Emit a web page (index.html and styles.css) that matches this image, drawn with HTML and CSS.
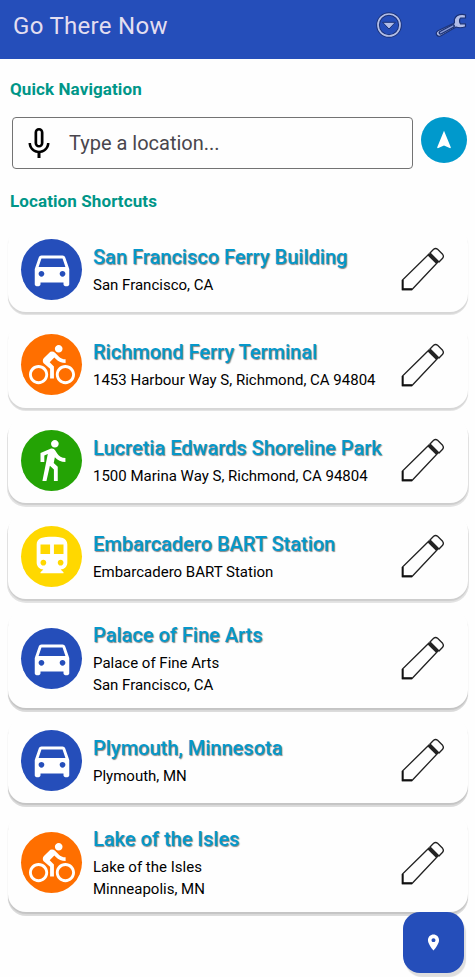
FILE: index.html
```html
<!DOCTYPE html>
<html lang="en">
<head>
<meta charset="utf-8">
<title>Go There Now</title>
<link rel="stylesheet" href="styles.css">
</head>
<body>
<svg class="defs" width="0" height="0" aria-hidden="true">
  <symbol id="car" viewBox="0 0 24 24"><path d="M18.92 6.01C18.72 5.42 18.16 5 17.5 5h-11c-.66 0-1.21.42-1.42 1.01L3 12v8c0 .55.45 1 1 1h1c.55 0 1-.45 1-1v-1h12v1c0 .55.45 1 1 1h1c.55 0 1-.45 1-1v-8l-2.080-5.990zM6.500 16c-.83 0-1.500-.67-1.500-1.500S5.670 13 6.500 13s1.500.67 1.500 1.500S7.330 16 6.500 16zm11 0c-.83 0-1.500-.67-1.500-1.500s.67-1.500 1.500-1.500 1.500.67 1.500 1.500-.67 1.500-1.500 1.500zM5 11l1.500-4.500h11L19 11H5z"/></symbol>
  <symbol id="bike" viewBox="0 0 24 24"><path d="M15.500 5.500c1.100 0 2-.9 2-2s-.9-2-2-2-2 .9-2 2 .9 2 2 2zM5 12c-2.800 0-5 2.200-5 5s2.200 5 5 5 5-2.200 5-5-2.200-5-5-5zm0 8.500c-1.900 0-3.500-1.600-3.500-3.500s1.600-3.500 3.500-3.500 3.500 1.600 3.500 3.500-1.600 3.500-3.500 3.500zm5.800-10l2.400-2.400.8.800c1.300 1.300 3 2.100 5.100 2.100V9c-1.500 0-2.700-.6-3.600-1.500l-1.900-1.900c-.5-.4-1-.6-1.600-.6s-1.100.2-1.400.6L7.800 8.400c-.4.400-.6.900-.6 1.400 0 .6.2 1.100.6 1.400L11 14v5h2v-6.200l-2.200-2.300zM19 12c-2.800 0-5 2.200-5 5s2.200 5 5 5 5-2.200 5-5-2.200-5-5-5zm0 8.500c-1.900 0-3.500-1.600-3.500-3.500s1.600-3.500 3.500-3.500 3.500 1.600 3.500 3.500-1.600 3.500-3.500 3.500z"/></symbol>
  <symbol id="walk" viewBox="0 0 24 24"><path d="M13.500 5.500c1.100 0 2-.9 2-2s-.9-2-2-2-2 .9-2 2 .9 2 2 2zM9.800 8.900L7 23h2.100l1.800-8 2.100 2v6h2v-7.500l-2.100-2 .6-3C14.800 12 16.800 13 19 13v-2c-1.900 0-3.500-1-4.300-2.400l-1-1.600c-.4-.6-1-1-1.700-1-.3 0-.5.1-.8.1L6 8.300V13h2V9.600l1.800-.7"/></symbol>
  <symbol id="train" viewBox="0 0 24 24"><path d="M12 2c-4.420 0-8 .5-8 4v9.500C4 17.430 5.570 19 7.500 19L6 20.500v.5h12v-.5L16.500 19c1.930 0 3.500-1.570 3.500-3.500V6c0-3.500-3.580-4-8-4zM7.500 17c-.83 0-1.500-.67-1.500-1.500S6.670 14 7.500 14s1.500.67 1.500 1.500S8.330 17 7.500 17zM11 11H6V6h5v5zm5.500 6c-.83 0-1.500-.67-1.500-1.500s.67-1.500 1.500-1.500 1.500.67 1.500 1.500-.67 1.500-1.500 1.500zM18 11h-5V6h5v5z"/></symbol>
  <symbol id="pencil" viewBox="0 0 46 46">
    <path d="M2.500 43.500V34L29 8l8.500 8.500L12 43.500z" fill="none" stroke="#222" stroke-width="1.300"/>
    <path d="M2.700 34v9.300H12" fill="none" stroke="#111" stroke-width="1.900"/>
    <path d="M28.800 8.300l8.600 8.500" stroke="#222" stroke-width="3.200"/>
    <path d="M30 7l3.600-3.700q2-1.600 4 0l5 5q1.600 2 0 4L39 16z" fill="#fefefe" stroke="#222" stroke-width="1.300"/>
  </symbol>
</svg>

<header class="bar">
  <h1 class="bar-title">Go There Now</h1>
  <svg class="bar-sort" viewBox="0 0 26 26">
    <circle cx="13" cy="13" r="11" fill="none" stroke="#1b3277" stroke-width="3.600"/>
    <circle cx="13" cy="13" r="11" fill="none" stroke="#b2bee8" stroke-width="1.700"/>
    <path d="M6.600 10.300h12.800L13 17z" fill="#b2bee8" stroke="#1b3277" stroke-width="1"/>
  </svg>
  <svg class="bar-tool" viewBox="0 0 32 24">
    <path d="M30.500 1.800Q22 .2 19.400 6.200V10L3 17.800Q.3 19.500 1.800 22 3.600 24.200 6 22.700L21 14q4 1.600 9.500-.2v-3h-5q-2-2.900 0-5.800h5z" fill="#b2bee8" stroke="#1b3277" stroke-width="1.200" stroke-linejoin="round"/>
    <path d="M5.500 19.700L18 13" stroke="#1b3277" stroke-width="4" stroke-linecap="round"/>
    <path d="M5.700 19.600L17.800 13.100" stroke="#8799d5" stroke-width="1.500" stroke-linecap="round"/>
  </svg>
</header>

<main class="page">
  <h2 class="section">Quick Navigation</h2>
  <div class="search">
    <div class="field">
      <svg class="mic" viewBox="0 0 24 24"><path d="M12 15c1.660 0 2.990-1.340 2.990-3L15 5c0-1.660-1.340-3-3-3S9 3.340 9 5v7c0 1.660 1.340 3 3 3zm-1.200-10.100c0-.66.54-1.200 1.200-1.200s1.200.54 1.200 1.200l-.01 7.200c0 .66-.53 1.200-1.190 1.200s-1.200-.54-1.200-1.200V4.900zm6.500 7.100c0 3-2.540 5.100-5.300 5.100S6.700 15 6.700 12H5c0 3.410 2.720 6.230 6 6.720V22h2v-3.280c3.280-.48 6-3.300 6-6.720h-1.700z"/></svg>
      <span class="placeholder">Type a location...</span>
    </div>
    <div class="go"><svg viewBox="0 0 24 24"><path d="M12 2L4.500 20.290l.71.710L12 18l6.790 3 .71-.71z"/></svg></div>
  </div>
  <h2 class="section">Location Shortcuts</h2>

  <div class="list">
    <article class="card s1">
      <div class="mode drive"><svg><use href="#car"/></svg></div>
      <div class="text"><h3>San Francisco Ferry Building</h3><p>San Francisco, CA</p></div>
      <svg class="edit"><use href="#pencil"/></svg>
    </article>
    <article class="card s1">
      <div class="mode cycle"><svg><use href="#bike"/></svg></div>
      <div class="text"><h3>Richmond Ferry Terminal</h3><p>1453 Harbour Way S, Richmond, CA 94804</p></div>
      <svg class="edit"><use href="#pencil"/></svg>
    </article>
    <article class="card s2">
      <div class="mode foot"><svg><use href="#walk"/></svg></div>
      <div class="text"><h3>Lucretia Edwards Shoreline Park</h3><p>1500 Marina Way S, Richmond, CA 94804</p></div>
      <svg class="edit"><use href="#pencil"/></svg>
    </article>
    <article class="card s2">
      <div class="mode transit"><svg><use href="#train"/></svg></div>
      <div class="text"><h3>Embarcadero BART Station</h3><p>Embarcadero BART Station</p></div>
      <svg class="edit"><use href="#pencil"/></svg>
    </article>
    <article class="card tall s3">
      <div class="mode drive"><svg><use href="#car"/></svg></div>
      <div class="text"><h3>Palace of Fine Arts</h3><p>Palace of Fine Arts<br>San Francisco, CA</p></div>
      <svg class="edit"><use href="#pencil"/></svg>
    </article>
    <article class="card s3">
      <div class="mode drive"><svg><use href="#car"/></svg></div>
      <div class="text"><h3>Plymouth, Minnesota</h3><p>Plymouth, MN</p></div>
      <svg class="edit"><use href="#pencil"/></svg>
    </article>
    <article class="card tall s3">
      <div class="mode cycle"><svg><use href="#bike"/></svg></div>
      <div class="text"><h3>Lake of the Isles</h3><p>Lake of the Isles<br>Minneapolis, MN</p></div>
      <svg class="edit"><use href="#pencil"/></svg>
    </article>
  </div>
</main>

<div class="fab"><svg viewBox="0 0 24 24"><path d="M12 2C8.130 2 5 5.130 5 9c0 5.250 7 13 7 13s7-7.750 7-13c0-3.870-3.130-7-7-7zm0 9.500c-1.380 0-2.500-1.120-2.500-2.500s1.120-2.500 2.500-2.500 2.500 1.120 2.500 2.500-1.120 2.500-2.500 2.500z"/></svg></div>
</body>
</html>
```
FILE: styles.css
```css
* { box-sizing: border-box; margin: 0; padding: 0; }
body {
  width: 475px;
  height: 977px;
  overflow: hidden;
  background: #fefefe;
  font-family: Roboto, sans-serif;
  position: relative;
}
svg { display: block; flex: none; }
.defs { position: absolute; }

.bar {
  height: 59px;
  background: #254eba;
  display: flex;
  align-items: center;
  padding: 0 8px 9px 13px;
}
.bar-title {
  flex: 1;
  font-size: 24px;
  font-weight: 400;
  line-height: 30px;
  letter-spacing: 0.3px;
  color: #e3def0;
  padding-top: 1px;
}
.bar-sort { width: 26px; height: 26px; margin-right: 33px; }
.bar-tool { width: 32px; height: 24px; }

.section {
  font-size: 17px;
  font-weight: 700;
  line-height: 22px;
  letter-spacing: 0.1px;
  color: #009688;
  padding-left: 10px;
}
.page { padding-top: 19px; }
.search {
  display: flex;
  align-items: flex-start;
  gap: 8px;
  padding: 17px 8px 0 12px;
  margin-bottom: 21px;
}
.field {
  width: 401px;
  height: 52px;
  border: 1px solid #737373;
  border-radius: 4px;
  display: flex;
  align-items: center;
  padding-left: 8px;
}
.mic { width: 36px; height: 36px; }
.placeholder {
  font-size: 20px;
  color: #49464d;
  margin-left: 12px;
}
.go {
  width: 46px;
  height: 46px;
  border-radius: 50%;
  background: #0099cc;
  display: flex;
  align-items: center;
  justify-content: center;
}
.go svg { width: 22px; height: 22px; fill: #fff; }

.list {
  display: flex;
  flex-direction: column;
  gap: 9.700px;
  padding: 14px 7px 0 8px;
}
.card {
  height: 86px;
  border-radius: 18px;
  background: #fefefe;
  display: flex;
  align-items: center;
  padding: 0 22px 0 13px;
}
.card.tall { height: 99px; }
.s1 { box-shadow: 0 2px 1px #d6d6d6, 0 3px 0 #e6e6e6; }
.s2 { box-shadow: 0 2px 1px #cdcdcd, 0 3px 0 1px #e4e4e4; }
.s3 { box-shadow: 0 2px 1px #c4c4c4, 0 4px 0 #dcdcdc; }
.mode {
  width: 61px;
  height: 61px;
  border-radius: 50%;
  flex: none;
  display: flex;
  align-items: center;
  justify-content: center;
}
.mode svg { width: 46px; height: 46px; fill: #fff; }
.drive { background: #254eba; }
.cycle { background: #ff6f00; }
.foot { background: #24a305; }
.transit { background: #ffd800; }
.text { flex: 1; padding-left: 11px; white-space: nowrap; min-width: 0; }
.text h3 {
  font-size: 20px;
  font-weight: 500;
  line-height: 28px;
  color: #0598cb;
  text-shadow: 1px 1px 1px #888;
}
.text p {
  font-size: 15px;
  line-height: 22px;
  color: #000;
  padding-top: 3px;
}
.edit { width: 46px; height: 46px; }

.fab {
  position: absolute;
  left: 403px;
  top: 912px;
  width: 61px;
  height: 61px;
  border-radius: 17px;
  background: #254eba;
  box-shadow: 2px 4px 1px #dedede;
  display: flex;
  align-items: center;
  justify-content: center;
}
.fab svg { width: 19px; height: 19px; fill: #fff; }
```
